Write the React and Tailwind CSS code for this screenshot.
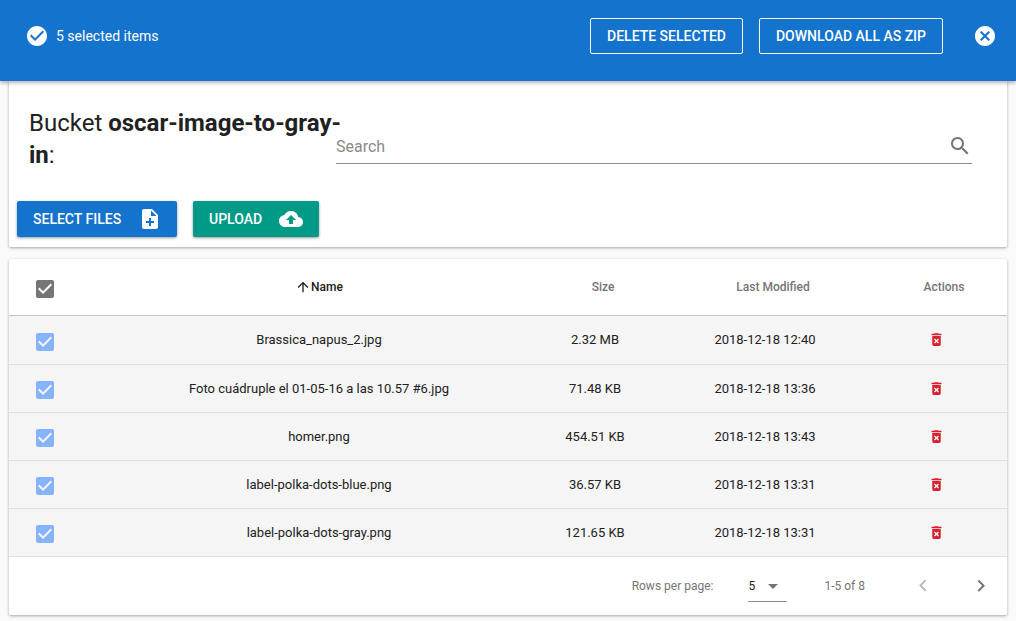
const checkCircle = 'M12 2C6.48 2 2 6.48 2 12s4.48 10 10 10 10-4.48 10-10S17.52 2 12 2zm-2 15l-5-5 1.41-1.41L10 14.17l7.59-7.59L19 8l-9 9z';
const cancel = 'M12 2C6.47 2 2 6.47 2 12s4.47 10 10 10 10-4.47 10-10S17.53 2 12 2zm5 13.59L15.59 17 12 13.41 8.41 17 7 15.59 10.59 12 7 8.41 8.41 7 12 10.59 15.59 7 17 8.41 13.41 12 17 15.59z';
const noteAdd = 'M14 2H6c-1.1 0-1.99.9-1.99 2L4 20c0 1.1.89 2 1.99 2H18c1.1 0 2-.9 2-2V8l-6-6zm2 14h-3v3h-2v-3H8v-2h3v-3h2v3h3v2zm-3-7V3.5L18.5 9H13z';
const cloudUpload = 'M19.35 10.04C18.67 6.59 15.64 4 12 4 9.11 4 6.6 5.64 5.35 8.04 2.34 8.36 0 10.91 0 14c0 3.31 2.69 6 6 6h13c2.76 0 5-2.24 5-5 0-2.64-2.05-4.78-4.65-4.96zM14 13v4h-4v-4H7l5-5 5 5h-3z';
const search = 'M15.5 14h-.79l-.28-.27C15.41 12.59 16 11.11 16 9.5 16 5.91 13.09 3 9.5 3S3 5.91 3 9.5 5.91 16 9.5 16c1.61 0 3.09-.59 4.23-1.57l.27.28v.79l5 4.99L20.49 19l-4.99-5zm-6 0C7.01 14 5 11.99 5 9.5S7.01 5 9.5 5 14 7.01 14 9.5 11.99 14 9.5 14z';
const deleteForever = 'M6 19c0 1.1.9 2 2 2h8c1.1 0 2-.9 2-2V7H6v12zm2.46-7.12l1.41-1.41L12 12.59l2.12-2.12 1.41 1.41L13.41 14l2.12 2.12-1.41 1.41L12 15.41l-2.12 2.12-1.41-1.41L10.59 14l-2.13-2.12zM15.5 4l-1-1h-5l-1 1H5v2h14V4z';
const checkBox = 'M19 3H5c-1.11 0-2 .9-2 2v14c0 1.1.89 2 2 2h14c1.11 0 2-.9 2-2V5c0-1.1-.89-2-2-2zm-9 14l-5-5 1.41-1.41L10 14.17l7.59-7.59L19 8l-9 9z';
const arrowUp = 'M4 12l1.41 1.41L11 7.83V20h2V7.83l5.58 5.59L20 12l-8-8-8 8z';
const dropDown = 'M7 10l5 5 5-5z';
const chevronLeft = 'M15.41 16.09l-4.58-4.59 4.58-4.59L14 5.5l-6 6 6 6z';
const chevronRight = 'M8.59 16.34l4.58-4.59-4.58-4.59L10 5.75l6 6-6 6z';

const Icon = ({ d, className }) => (
    <svg viewBox="0 0 24 24" className={className} fill="currentColor">
        <path d={d} />
    </svg>
);

const files = [
    { name: 'Brassica_napus_2.jpg', size: '2.32 MB', date: '2018-12-18 12:40' },
    { name: 'Foto cuádruple el 01-05-16 a las 10.57 #6.jpg', size: '71.48 KB', date: '2018-12-18 13:36' },
    { name: 'homer.png', size: '454.51 KB', date: '2018-12-18 13:43' },
    { name: 'label-polka-dots-blue.png', size: '36.57 KB', date: '2018-12-18 13:31' },
    { name: 'label-polka-dots-gray.png', size: '121.65 KB', date: '2018-12-18 13:31' },
];

const columns = 'grid grid-cols-[104px_412px_140px_200px_142px] items-center';

const App = () => {
    return (
        <div className="h-[621px] overflow-hidden bg-[#fafafa] font-['Roboto',sans-serif] text-[#212121]">
            {/* Selection bar */}
            <div className="relative z-10 flex h-[81px] items-center bg-[#1473cd] pb-[9px] pl-[25px] pr-[19px] text-white shadow-[0_2px_4px_rgba(0,0,0,0.3)]">
                <Icon d={checkCircle} className="size-6" />
                <span className="ml-[7px] text-sm">5 selected items</span>
                <button className="ml-auto h-9 w-[153px] rounded-[2px] border border-white text-sm font-medium">DELETE SELECTED</button>
                <button className="ml-4 h-9 w-[184px] rounded-[2px] border border-white text-sm font-medium">DOWNLOAD ALL AS ZIP</button>
                <Icon d={cancel} className="ml-[30px] size-6" />
            </div>

            {/* Bucket header */}
            <div className="mx-[9px] h-[166px] rounded-b-[2px] bg-white pt-[26px] shadow-[0_1px_3px_rgba(0,0,0,0.35)]">
                <div className="flex">
                    <h1 className="w-[327px] shrink-0 whitespace-nowrap pl-5 text-2xl leading-8">
                        Bucket <b className="font-bold">oscar-image-to-gray-<br />in</b>:
                    </h1>
                    <div className="mt-[26px] flex h-[31px] w-[636px] items-center justify-between border-b border-[#8c8c8c] pb-1">
                        <span className="relative top-px text-base text-[#8a8a8a]">Search</span>
                        <Icon d={search} className="size-6 text-[#757575]" />
                    </div>
                </div>
                <div className="ml-2 mt-[30px] flex gap-4">
                    <button className="flex h-9 w-40 items-center justify-between rounded-[2px] bg-[#1473cd] pl-4 pr-[15px] text-sm font-medium text-white shadow-[0_1px_3px_rgba(0,0,0,0.4)]">
                        SELECT FILES
                        <Icon d={noteAdd} className="size-6" />
                    </button>
                    <button className="flex h-9 w-[126px] items-center justify-between rounded-[2px] bg-[#019a87] pl-4 pr-4 text-sm font-medium text-white shadow-[0_1px_3px_rgba(0,0,0,0.4)]">
                        UPLOAD
                        <Icon d={cloudUpload} className="size-6" />
                    </button>
                </div>
            </div>

            {/* File table */}
            <div className="mx-[9px] mt-3 h-[356px] rounded-[2px] bg-white shadow-[0_1px_3px_rgba(0,0,0,0.35)]">
                <div className={`${columns} h-[57px] border-b border-[#c4c4c4] text-xs font-medium text-[#757575]`}>
                    <Icon d={checkBox} className="ml-6 mt-1 size-6 text-[#757575]" />
                    <div className="flex items-center justify-center text-[#212121]">
                        <Icon d={arrowUp} className="size-4" />
                        Name
                    </div>
                    <div className="pl-4 text-center">Size</div>
                    <div className="pl-4 text-center">Last Modified</div>
                    <div className="pl-4 text-center">Actions</div>
                </div>
                <div>
                    {files.map((file, i) => (
                        <div key={file.name} className={`${columns} h-12 border-b border-[#e0e0e0] bg-[#f5f5f5] text-[13px] first:h-[49px] first:pb-px`}>
                            <Icon d={checkBox} className={i === 0 ? 'ml-6 mt-1 size-6 text-[#86b3ff]' : 'ml-6 mt-[2px] size-6 text-[#86b3ff]'} />
                            <div className="text-center">{file.name}</div>
                            <div className="text-center">{file.size}</div>
                            <div className="text-center">{file.date}</div>
                            <Icon d={deleteForever} className="mx-auto size-[17px] text-[#d9202f]" />
                        </div>
                    ))}
                </div>
                <div className="flex h-[58px] items-center justify-end pr-[14px] text-xs text-[#757575]">
                    <span>Rows per page:</span>
                    <div className="relative ml-[35px] flex h-8 w-[39px] items-center border-b border-[#8c8c8c] text-[#212121]">
                        <span>5</span>
                        <Icon d={dropDown} className="absolute right-[2px] top-1 size-6 text-[#757575]" />
                    </div>
                    <span className="ml-[37px]">1-5 of 8</span>
                    <Icon d={chevronLeft} className="ml-[46px] size-6 text-[#bdbdbd]" />
                    <Icon d={chevronRight} className="ml-[34px] size-6 text-[#757575]" />
                </div>
            </div>
        </div>
    );
};

export default App;
